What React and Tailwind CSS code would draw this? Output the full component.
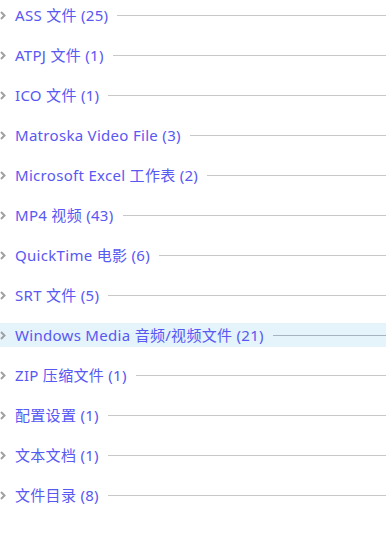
import React from 'react';

const groups = [
  'ASS 文件 (25)',
  'ATPJ 文件 (1)',
  'ICO 文件 (1)',
  'Matroska Video File (3)',
  'Microsoft Excel 工作表 (2)',
  'MP4 视频 (43)',
  'QuickTime 电影 (6)',
  'SRT 文件 (5)',
  'Windows Media 音频/视频文件 (21)',
  'ZIP 压缩文件 (1)',
  '配置设置 (1)',
  '文本文档 (1)',
  '文件目录 (8)',
];

function Chevron() {
  return (
    <svg width="7" height="9" viewBox="0 0 7 9" className="shrink-0">
      <path d="M1 1 L4.5 4.5 L1 8" fill="none" stroke="#a0a0a0" strokeWidth="2" />
    </svg>
  );
}

function GroupRow({ label, active }) {
  return (
    <div className={`flex items-center h-6 ${active ? 'bg-[#e5f3fb]' : ''}`}>
      <div className="w-[15px] flex items-center">
        <Chevron />
      </div>
      <span className="text-[15px] leading-none tracking-[0.3px] text-[#5858f2] whitespace-nowrap">{label}</span>
      <div className={`flex-1 h-px ml-[9px] ${active ? 'bg-[#a6b4c2]' : 'bg-[#c8c8c8]'}`} />
    </div>
  );
}

export default function App() {
  return (
    <div
      className="w-[386px] h-[552px] bg-white pt-[3px] flex flex-col gap-4 overflow-hidden"
      style={{ fontFamily: '"Noto Sans", "Noto Sans CJK SC", sans-serif' }}
    >
      {groups.map((g, i) => (
        <GroupRow key={g} label={g} active={i === 8} />
      ))}
    </div>
  );
}
